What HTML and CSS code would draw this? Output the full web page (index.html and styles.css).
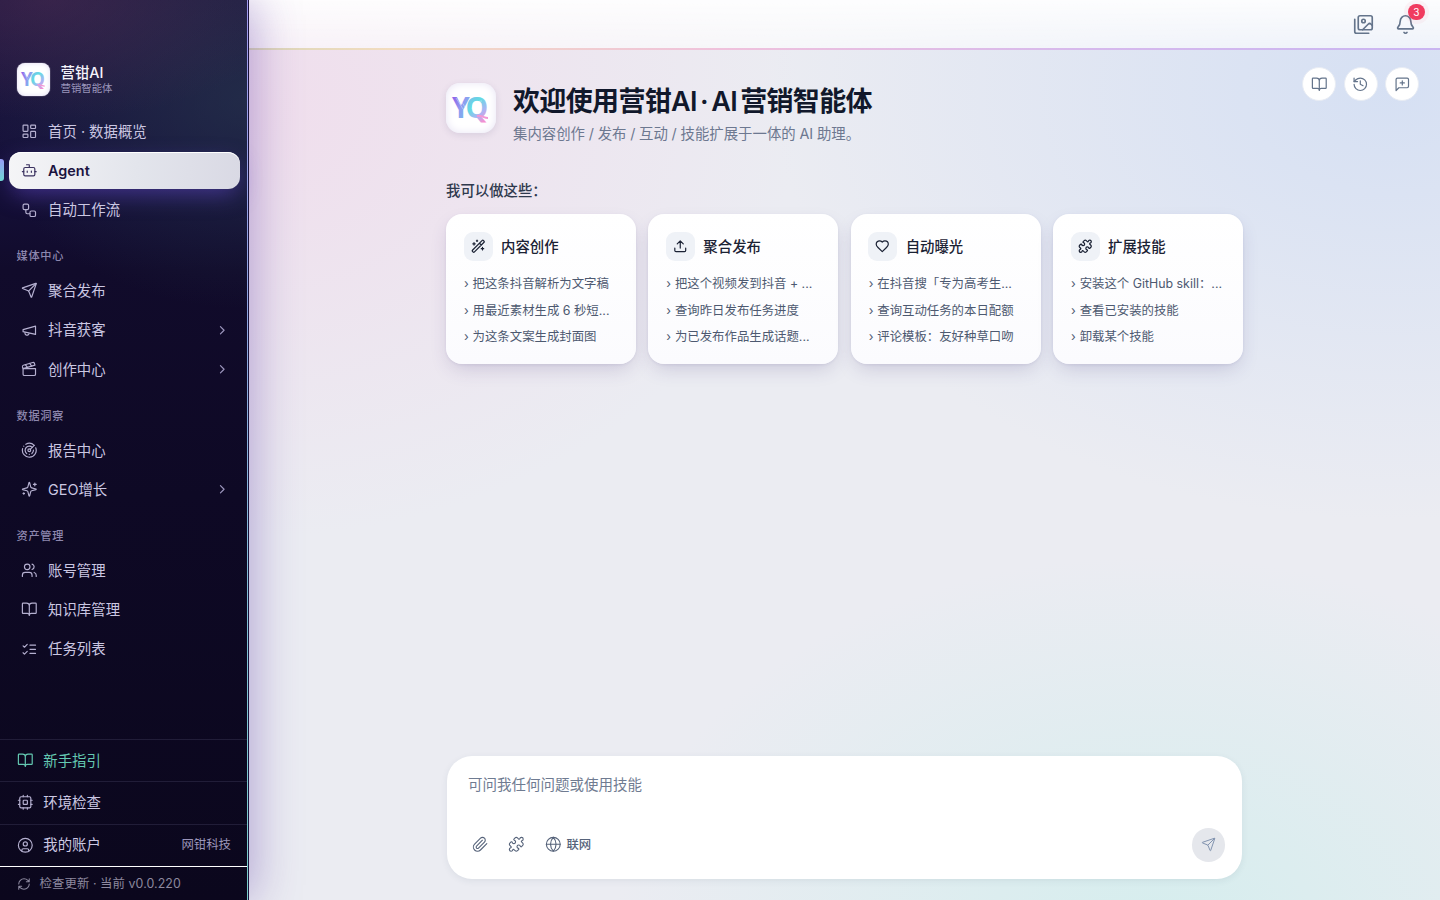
FILE: index.html
```html
<!DOCTYPE html>
<html lang="zh-CN">
<head>
<meta charset="utf-8">
<title>营钳AI</title>
<link rel="stylesheet" href="styles.css">
</head>
<body>
<svg class="defs" aria-hidden="true">
  <defs>
    <linearGradient id="g-y" x1="0" y1="0" x2="1" y2="1"><stop offset="0" stop-color="#8a4fe8"/><stop offset=".5" stop-color="#8f9cf0"/><stop offset="1" stop-color="#5fd0e8"/></linearGradient>
    <linearGradient id="g-q" x1="0" y1="0" x2=".6" y2="1"><stop offset="0" stop-color="#8fa6f5"/><stop offset=".5" stop-color="#62dbe2"/><stop offset=".78" stop-color="#a9b5f5"/><stop offset="1" stop-color="#f58fd0"/></linearGradient>
    <symbol id="yq" viewBox="0 0 50 50"><text class="yq" x="6" y="35" fill="url(#g-y)">Y</text><text class="yq" x="19.6" y="35" fill="url(#g-q)">Q</text><path d="m10 15 7 11m-4-11 6 9m7 2c1-5 5-8 10-8m-8 9c1-4 4-6 8-6" fill="none" stroke="#fff" stroke-opacity=".5" stroke-width=".7"/><path d="M31 33c4-1 7 2 11 2" fill="none" stroke="#f397d5" stroke-width="2"/></symbol>
    <symbol id="dash" viewBox="0 0 24 24"><rect width="7" height="9" x="3" y="3" rx="1"/><rect width="7" height="5" x="14" y="3" rx="1"/><rect width="7" height="9" x="14" y="12" rx="1"/><rect width="7" height="5" x="3" y="16" rx="1"/></symbol>
    <symbol id="bot" viewBox="0 0 24 24"><path d="M12 8V4H8"/><rect width="16" height="12" x="4" y="8" rx="2"/><path d="M2 14h2m16 0h2m-7-1v2m-6-2v2"/></symbol>
    <symbol id="flow" viewBox="0 0 24 24"><rect width="8" height="8" x="3" y="3" rx="2"/><path d="M7 11v4a2 2 0 0 0 2 2h4"/><rect width="8" height="8" x="13" y="13" rx="2"/></symbol>
    <symbol id="send" viewBox="0 0 24 24"><path d="M14.536 21.686a.5.5 0 0 0 .937-.024l6.5-19a.496.496 0 0 0-.635-.635l-19 6.5a.5.5 0 0 0-.024.937l7.93 3.18a2 2 0 0 1 1.112 1.11z"/><path d="m21.854 2.147-10.94 10.939"/></symbol>
    <symbol id="mega" viewBox="0 0 24 24"><path d="m3 11 18-5v12L3 14v-3z"/><path d="M11.6 16.8a3 3 0 1 1-5.8-1.6"/></symbol>
    <symbol id="clap" viewBox="0 0 24 24"><path d="M20.2 6 3 11l-.9-2.4c-.3-1.1.3-2.2 1.3-2.5l13.5-4c1.1-.3 2.2.3 2.5 1.3Z"/><path d="m6.2 5.3 3.1 3.9m3.1-5.8 3.1 4M3 11h18v8a2 2 0 0 1-2 2H5a2 2 0 0 1-2-2Z"/></symbol>
    <symbol id="radar" viewBox="0 0 24 24"><path d="M19.07 4.93A10 10 0 0 0 6.99 3.34M4 6h.01M2.29 9.62A10 10 0 1 0 21.31 8.35M16.24 7.76A6 6 0 1 0 8.23 16.67M12 18h.01M17.99 11.66A6 6 0 0 1 15.77 16.67"/><circle cx="12" cy="12" r="2"/><path d="m13.41 10.59 5.66-5.66"/></symbol>
    <symbol id="spark" viewBox="0 0 24 24"><path d="M9.937 15.5A2 2 0 0 0 8.5 14.063l-6.135-1.582a.5.5 0 0 1 0-.962L8.5 9.936A2 2 0 0 0 9.937 8.5l1.582-6.135a.5.5 0 0 1 .963 0L14.063 8.5A2 2 0 0 0 15.5 9.937l6.135 1.581a.5.5 0 0 1 0 .964L15.5 14.063a2 2 0 0 0-1.437 1.437l-1.582 6.135a.5.5 0 0 1-.963 0zM20 3v4m2-2h-4M4 17v2m1-1H3"/></symbol>
    <symbol id="users" viewBox="0 0 24 24"><path d="M16 21v-2a4 4 0 0 0-4-4H6a4 4 0 0 0-4 4v2"/><circle cx="9" cy="7" r="4"/><path d="M22 21v-2a4 4 0 0 0-3-3.87M16 3.13a4 4 0 0 1 0 7.75"/></symbol>
    <symbol id="book" viewBox="0 0 24 24"><path d="M12 7v14M3 18a1 1 0 0 1-1-1V4a1 1 0 0 1 1-1h5a4 4 0 0 1 4 4 4 4 0 0 1 4-4h5a1 1 0 0 1 1 1v13a1 1 0 0 1-1 1h-6a3 3 0 0 0-3 3 3 3 0 0 0-3-3z"/></symbol>
    <symbol id="list" viewBox="0 0 24 24"><path d="m3 17 2 2 4-4M3 7l2 2 4-4m4 1h8m-8 6h8m-8 6h8"/></symbol>
    <symbol id="chev" viewBox="0 0 24 24"><path d="m9 18 6-6-6-6"/></symbol>
    <symbol id="cpu" viewBox="0 0 24 24"><rect width="16" height="16" x="4" y="4" rx="2"/><rect width="6" height="6" x="9" y="9" rx="1"/><path d="M15 2v2m0 16v2M2 15h2M2 9h2m16 6h2m-2-6h2M9 2v2m0 16v2"/></symbol>
    <symbol id="user" viewBox="0 0 24 24"><circle cx="12" cy="12" r="10"/><circle cx="12" cy="10" r="3"/><path d="M7 20.662V19a2 2 0 0 1 2-2h6a2 2 0 0 1 2 2v1.662"/></symbol>
    <symbol id="sync" viewBox="0 0 24 24"><path d="M3 12a9 9 0 0 1 9-9 9.75 9.75 0 0 1 6.74 2.74L21 8M21 3v5h-5M21 12a9 9 0 0 1-9 9 9.75 9.75 0 0 1-6.74-2.74L3 16M8 16H3v5"/></symbol>
    <symbol id="images" viewBox="0 0 24 24"><path d="M18 22H4a2 2 0 0 1-2-2V6"/><path d="m22 13-1.296-1.296a2.41 2.41 0 0 0-3.408 0L11 18"/><circle cx="12" cy="8" r="2"/><rect width="16" height="16" x="6" y="2" rx="2"/></symbol>
    <symbol id="bell" viewBox="0 0 24 24"><path d="M10.268 21a2 2 0 0 0 3.464 0M3.262 15.326A1 1 0 0 0 4 17h16a1 1 0 0 0 .74-1.673C19.41 13.956 18 12.499 18 8A6 6 0 0 0 6 8c0 4.499-1.411 5.956-2.738 7.326"/></symbol>
    <symbol id="history" viewBox="0 0 24 24"><path d="M3 12a9 9 0 1 0 9-9 9.75 9.75 0 0 0-6.74 2.74L3 8"/><path d="M3 3v5h5m4-1v5l4 2"/></symbol>
    <symbol id="chat" viewBox="0 0 24 24"><path d="M21 15a2 2 0 0 1-2 2H7l-4 4V5a2 2 0 0 1 2-2h14a2 2 0 0 1 2 2zM12 7v6m-3-3h6"/></symbol>
    <symbol id="wand" viewBox="0 0 24 24"><path d="m21.64 3.64-1.28-1.28a1.21 1.21 0 0 0-1.72 0L2.36 18.64a1.21 1.21 0 0 0 0 1.72l1.28 1.28a1.2 1.2 0 0 0 1.72 0L21.64 5.36a1.2 1.2 0 0 0 0-1.72M14 7l3 3M5 6v4m14 4v4M10 2v2M7 8H3m18 8h-4M11 3H9"/></symbol>
    <symbol id="upload" viewBox="0 0 24 24"><path d="M12 3v12m5-7-5-5-5 5M21 15v4a2 2 0 0 1-2 2H5a2 2 0 0 1-2-2v-4"/></symbol>
    <symbol id="heart" viewBox="0 0 24 24"><path d="M19 14c1.49-1.46 3-3.21 3-5.5A5.5 5.5 0 0 0 16.5 3c-1.76 0-3 .5-4.5 2-1.5-1.5-2.74-2-4.5-2A5.5 5.5 0 0 0 2 8.5c0 2.3 1.5 4.05 3 5.5l7 7Z"/></symbol>
    <symbol id="puzzle" viewBox="0 0 24 24"><path d="M15.39 4.39a1 1 0 0 0 1.68-.474 2.5 2.5 0 1 1 3.014 3.015 1 1 0 0 0-.474 1.68l1.683 1.682a2.414 2.414 0 0 1 0 3.414L19.61 15.39a1 1 0 0 1-1.68-.474 2.5 2.5 0 1 0-3.014 3.015 1 1 0 0 1 .474 1.68l-1.683 1.682a2.414 2.414 0 0 1-3.414 0L8.61 19.61a1 1 0 0 0-1.68.474 2.5 2.5 0 1 1-3.014-3.015 1 1 0 0 0 .474-1.68l-1.683-1.682a2.414 2.414 0 0 1 0-3.414L4.39 8.61a1 1 0 0 1 1.68.474 2.5 2.5 0 1 0 3.014-3.015 1 1 0 0 1-.474-1.68l1.683-1.682a2.414 2.414 0 0 1 3.414 0z"/></symbol>
    <symbol id="clip" viewBox="0 0 24 24"><path d="m21.44 11.05-9.19 9.19a6 6 0 0 1-8.49-8.49l8.57-8.57A4 4 0 1 1 18 8.84l-8.59 8.57a2 2 0 0 1-2.83-2.83l8.49-8.48"/></symbol>
    <symbol id="globe" viewBox="0 0 24 24"><circle cx="12" cy="12" r="10"/><path d="M12 2a14.5 14.5 0 0 0 0 20 14.5 14.5 0 0 0 0-20M2 12h20"/></symbol>
  </defs>
</svg>
<div class="app">
  <aside class="sidebar">
    <div class="brand">
      <div class="logo"><svg><use href="#yq"/></svg></div>
      <div class="brand-text"><div class="brand-name">营钳AI</div><div class="brand-sub">营销智能体</div></div>
    </div>
    <nav class="nav">
      <a class="item"><svg class="i"><use href="#dash"/></svg>首页 · 数据概览</a>
      <a class="item active"><svg class="i"><use href="#bot"/></svg>Agent</a>
      <a class="item"><svg class="i"><use href="#flow"/></svg>自动工作流</a>
      <h4 class="section">媒体中心</h4>
      <a class="item"><svg class="i"><use href="#send"/></svg>聚合发布</a>
      <a class="item"><svg class="i"><use href="#mega"/></svg>抖音获客<svg class="i chev"><use href="#chev"/></svg></a>
      <a class="item"><svg class="i"><use href="#clap"/></svg>创作中心<svg class="i chev"><use href="#chev"/></svg></a>
      <h4 class="section">数据洞察</h4>
      <a class="item"><svg class="i"><use href="#radar"/></svg>报告中心</a>
      <a class="item"><svg class="i"><use href="#spark"/></svg>GEO增长<svg class="i chev"><use href="#chev"/></svg></a>
      <h4 class="section">资产管理</h4>
      <a class="item"><svg class="i"><use href="#users"/></svg>账号管理</a>
      <a class="item"><svg class="i"><use href="#book"/></svg>知识库管理</a>
      <a class="item"><svg class="i"><use href="#list"/></svg>任务列表</a>
    </nav>
    <div class="foot">
      <a class="row guide"><svg class="i"><use href="#book"/></svg>新手指引</a>
      <a class="row"><svg class="i"><use href="#cpu"/></svg>环境检查</a>
      <a class="row"><svg class="i"><use href="#user"/></svg>我的账户<span class="company">网钳科技</span></a>
      <a class="version"><svg class="i"><use href="#sync"/></svg>检查更新 · 当前 v0.0.220</a>
    </div>
  </aside>
  <main class="main">
    <header class="topbar">
      <svg class="i"><use href="#images"/></svg>
      <div class="bell"><svg class="i"><use href="#bell"/></svg><span class="badge">3</span></div>
    </header>
    <div class="tools">
      <button class="tool"><svg class="i"><use href="#book"/></svg></button>
      <button class="tool"><svg class="i"><use href="#history"/></svg></button>
      <button class="tool"><svg class="i"><use href="#chat"/></svg></button>
    </div>
    <div class="content">
      <div class="hero">
        <div class="logo big"><svg><use href="#yq"/></svg></div>
        <div><h1>欢迎使用营钳AI · AI 营销智能体</h1><p>集内容创作 / 发布 / 互动 / 技能扩展于一体的 AI 助理。</p></div>
      </div>
      <h2>我可以做这些：</h2>
      <div class="cards">
        <section class="card"><h3><span class="chip"><svg class="i"><use href="#wand"/></svg></span>内容创作</h3><ul><li>把这条抖音解析为文字稿</li><li>用最近素材生成 6 秒短...</li><li>为这条文案生成封面图</li></ul></section>
        <section class="card"><h3><span class="chip"><svg class="i"><use href="#upload"/></svg></span>聚合发布</h3><ul><li>把这个视频发到抖音 + ...</li><li>查询昨日发布任务进度</li><li>为已发布作品生成话题...</li></ul></section>
        <section class="card"><h3><span class="chip"><svg class="i"><use href="#heart"/></svg></span>自动曝光</h3><ul><li>在抖音搜「专为高考生...</li><li>查询互动任务的本日配额</li><li>评论模板：友好种草口吻</li></ul></section>
        <section class="card"><h3><span class="chip"><svg class="i"><use href="#puzzle"/></svg></span>扩展技能</h3><ul><li>安装这个 GitHub skill：...</li><li>查看已安装的技能</li><li>卸载某个技能</li></ul></section>
      </div>
      <div class="composer">
        <div class="placeholder">可问我任何问题或使用技能</div>
        <div class="actions">
          <svg class="i"><use href="#clip"/></svg>
          <svg class="i"><use href="#puzzle"/></svg>
          <span class="net"><svg class="i"><use href="#globe"/></svg>联网</span>
          <button class="submit"><svg class="i"><use href="#send"/></svg></button>
        </div>
      </div>
    </div>
  </main>
</div>
</body>
</html>
```
FILE: styles.css
```css
* { box-sizing: border-box; margin: 0; padding: 0; }
body { font-family: Inter, "Noto Sans CJK SC", sans-serif; font-size: 14.4px; line-height: 20px; overflow: hidden; }
button { border: 0; font: inherit; }
.defs { position: absolute; width: 0; height: 0; }
.i { width: 16.6px; height: 16.6px; flex: none; fill: none; stroke: currentColor; stroke-width: 1.75; stroke-linecap: round; stroke-linejoin: round; }
.yq { font: 700 28.5px "Open Sans", Inter, sans-serif; }
.app { display: flex; width: 1440px; height: 900px; }

.sidebar {
  width: 249px; padding-right: 2px; flex: none; display: flex; flex-direction: column; position: relative; z-index: 2; color: #cbc7e2;
  background:
    radial-gradient(ellipse 250px 120px at 20% 0, rgba(80, 44, 84, .5), transparent),
    radial-gradient(ellipse 270px 210px at 100% 11%, rgba(40, 58, 80, .6), transparent),
    linear-gradient(180deg, #1e1840 0, #15103a 20%, #110b2b 30%, #0e0925 55%, #0b071d 100%);
  box-shadow: 4px 0 44px rgba(90, 55, 165, .4);
}
.sidebar::after {
  content: ""; position: absolute; top: 0; right: 0; bottom: 0; width: 2px;
  background: linear-gradient(180deg, #a29bf0, #8fa6e2 35%, #80c3d6 70%, #79cfca) 0 0 / 1px 100% no-repeat, #171038;
}
.brand { display: flex; align-items: center; gap: 11px; height: 33px; margin: 62.5px 0 17.1px 16.5px; }
.brand-text { padding-top: 2px; }
.brand-name { font-weight: 500; color: #f4f3fb; line-height: 18px; }
.brand-sub { font-size: 10.4px; line-height: 14px; color: #9a95bb; }
.logo { width: 33px; height: 33px; border-radius: 8px; background: #fff; box-shadow: inset 0 0 5px #e1dcf4, 0 0 0 1px rgba(255, 255, 255, .12); }
.logo svg { display: block; width: 100%; height: 100%; }
.nav { flex: 1; display: flex; flex-direction: column; gap: 2.4px; padding: 0 7.5px 0 8.5px; }
.item { position: relative; display: flex; align-items: center; gap: 10.8px; height: 37px; padding: 0 12.2px; line-height: 19px; }
.item .i, .row .i { stroke-width: 1.7; color: #b5b0d0; }
.item .chev { width: 14.5px; height: 14.5px; margin-left: auto; margin-right: -2px; stroke-width: 2; color: #9c96bd; }
.item.active {
  font-weight: 600; color: #1a1340; border-radius: 12px;
  background: linear-gradient(95deg, #f5f5f7, #e3e5ec 55%, #d9d9e4);
  box-shadow: inset 0 1px #fff, 0 8px 22px -3px rgba(105, 75, 215, .5);
}
.item.active .i { color: #3a315f; }
.item.active::before { content: ""; position: absolute; left: -9px; top: 7.5px; width: 4px; height: 22px; border-radius: 0 3px 3px 0; background: linear-gradient(#9a9cf7, #6fd8d5); }
.section { font-size: 11.2px; font-weight: 500; letter-spacing: .7px; color: #8d87ae; height: 27.8px; padding: 10px 0 0 8px; line-height: 16px; margin: 7.5px 0 3.6px; }
.foot { border-top: 1px solid #211d38; }
.row { display: flex; align-items: center; gap: 10.2px; height: 42.4px; padding: 0 16px 1px 16.5px; border-bottom: 1px solid #211d38; line-height: 19px; }
.row:nth-child(3) { border-bottom: 1px solid #fff; }
.guide, .guide .i { color: #64c9b2; }
.company { margin-left: auto; font-size: 12.4px; color: #9a94b9; }
.version { display: flex; align-items: center; gap: 9px; height: 33px; padding: 0 16.5px; font-size: 12.4px; letter-spacing: .07px; color: #8d899f; }
.version .i { width: 14px; height: 14px; }

.main {
  position: relative; flex: 1; min-width: 0; display: flex; flex-direction: column;
  background:
    radial-gradient(ellipse 550px 430px at 0 12%, rgba(243, 213, 233, .62), transparent),
    radial-gradient(ellipse 620px 430px at 96% 10%, rgba(203, 218, 244, .66), transparent),
    radial-gradient(ellipse 540px 380px at 76% 104%, rgba(205, 238, 236, .72), transparent),
    #ebecf2;
}
.topbar {
  height: 50px; flex: none; display: flex; align-items: center; justify-content: flex-end; gap: 20.5px; padding: 0 24.5px 0 0; color: #64748b;
  border-bottom: 2px solid; border-image: linear-gradient(90deg, #dbd7b8, #f2dcc0 12%, #efc1dc 40%, #d6b9ec 70%, #c9b5f1) 1;
  background: linear-gradient(180deg, rgba(255, 255, 255, .92), rgba(255, 255, 255, .58));
}
.topbar .i { display: block; width: 21px; height: 21px; stroke-width: 1.9; }
.bell { position: relative; }
.badge { position: absolute; left: 13.5px; top: -10px; width: 16.5px; height: 16.5px; border-radius: 50%; background: #f03b5f; color: #fff; font-size: 10px; line-height: 16.5px; text-align: center; box-shadow: 0 0 0 4px rgba(240, 80, 120, .06); }
.tools { position: absolute; top: 67px; right: 21px; display: flex; gap: 7.5px; }
.tool { width: 34px; height: 34px; border-radius: 50%; display: grid; place-items: center; background: #fff; color: #64748b; border: 1px solid #e8ecf4; }
.content { width: 797px; flex: 1; margin-left: 197px; display: flex; flex-direction: column; padding: 33px 0 21px; }
.hero { display: flex; gap: 17px; }
.logo.big { width: 50px; height: 50px; flex: none; border-radius: 14px; box-shadow: inset 0 0 9px #e8e5f5, 0 2px 7px rgba(70, 60, 110, .13); }
h1 { font-size: 27px; font-weight: 600; letter-spacing: -.65px; word-spacing: -3px; line-height: 34px; padding-top: 1.5px; color: #11182b; white-space: nowrap; }
.hero p { font-size: 14.4px; line-height: 22px; margin-top: 4.5px; word-spacing: -.3px; color: #6d7890; }
h2 { font-size: 14.4px; font-weight: 500; color: #2f394d; line-height: 22px; margin-top: 35px; }
.cards { display: grid; grid-template-columns: repeat(4, 1fr); gap: 12.4px; margin-top: 12px; }
.card { height: 150px; padding: 18px 17.5px 0; border-radius: 16px; background: linear-gradient(#fff, #fbfbfe); box-shadow: 0 8px 20px -5px rgba(65, 50, 120, .22), 0 1px 3px rgba(65, 50, 120, .08); }
.card h3 { display: flex; align-items: center; gap: 8.5px; font-size: 14.4px; font-weight: 500; color: #1b2234; height: 29px; }
.chip { width: 29px; height: 29px; border-radius: 9px; background: #eff2f7; display: grid; place-items: center; }
.chip .i { width: 14.5px; height: 14.5px; stroke-width: 2; }
.card ul { list-style: none; margin-top: 10px; }
.card li { font-size: 12.4px; line-height: 26.5px; color: #4d5970; white-space: nowrap; }
.card li::before { content: "›"; display: inline-block; width: 8.6px; padding-left: .5px; }
.composer { margin: auto 1px 0 1px; height: 123px; border-radius: 25px; background: #fff; padding: 18px 17px 0 21px; display: flex; flex-direction: column; box-shadow: 0 2px 7px rgba(40, 60, 90, .08); }
.placeholder { font-size: 14.5px; line-height: 22px; color: #6f7b91; }
.actions { display: flex; align-items: center; margin-top: 32px; padding-left: 4px; gap: 19.6px; color: #56637a; }
.actions .i { stroke-width: 1.6; }
.net { display: flex; align-items: center; gap: 4.5px; margin-left: 1px; font-size: 12.4px; font-weight: 500; }
.submit { width: 33.5px; height: 33.5px; border-radius: 50%; margin-left: auto; background: #e5e7ec; color: #8294b0; display: grid; place-items: center; }
.submit .i { width: 15px; height: 15px; }
```
